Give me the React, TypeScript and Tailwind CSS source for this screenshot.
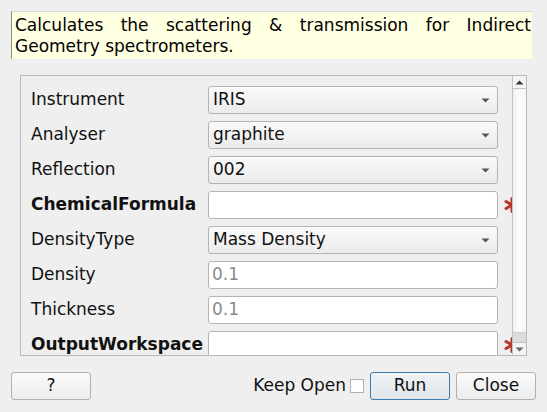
import React from "react";

const font = { fontFamily: '"DejaVu Sans", "Liberation Sans", sans-serif' };

function Arrow() {
  return (
    <svg width="9" height="5" viewBox="0 0 9 5" className="shrink-0">
      <path d="M0.5 0.5 L8.5 0.5 L4.5 4.5 Z" fill="#555" />
    </svg>
  );
}

function Combo({ value }: { value: string }) {
  return (
    <div className="h-[28px] w-[290px] flex items-center justify-between pl-[4px] pr-[7px] rounded-[3px] border border-[#b4b4b4] bg-gradient-to-b from-[#fafafa] to-[#ebebeb] text-[17px] text-[#111]">
      <span>{value}</span>
      <Arrow />
    </div>
  );
}

function Edit({ placeholder }: { placeholder?: string }) {
  return (
    <div className="h-[28px] w-[290px] flex items-center pl-[3px] rounded-[3px] border border-[#b4b4b4] bg-white text-[17px] text-[#8a8a8a]">
      {placeholder}
    </div>
  );
}

function Star() {
  return (
    <div className="w-[14px] h-[28px] flex items-center overflow-hidden">
      <svg width="16" height="16" viewBox="0 0 16 16" className="ml-[6px] shrink-0">
        <g stroke="#b5362b" strokeWidth="3" strokeLinecap="round">
          <line x1="8" y1="1.5" x2="8" y2="14.5" />
          <line x1="2" y1="4.5" x2="14" y2="11.5" />
          <line x1="2" y1="11.5" x2="14" y2="4.5" />
        </g>
      </svg>
    </div>
  );
}

type Row = { label: string; bold?: boolean; kind: "combo" | "edit"; value?: string; req?: boolean };

const rows: Row[] = [
  { label: "Instrument", kind: "combo", value: "IRIS" },
  { label: "Analyser", kind: "combo", value: "graphite" },
  { label: "Reflection", kind: "combo", value: "002" },
  { label: "ChemicalFormula", bold: true, kind: "edit", req: true },
  { label: "DensityType", kind: "combo", value: "Mass Density" },
  { label: "Density", kind: "edit", value: "0.1" },
  { label: "Thickness", kind: "edit", value: "0.1" },
  { label: "OutputWorkspace", bold: true, kind: "edit", req: true },
];

export default function App() {
  return (
    <div style={font} className="w-[547px] h-[412px] bg-[#efefef] flex flex-col overflow-hidden text-[#111]">
      <div className="mt-[11px] ml-[11px] w-[521px] h-[48px] bg-[#ffffe1] border-l border-l-[#8c8c8c] border-t border-t-[#d8d8d8] pl-[3px] pr-[1px] pt-[3px] text-[17px] leading-[21px] text-justify text-black overflow-hidden">
        Calculates the scattering &amp; transmission for Indirect Geometry spectrometers.
      </div>

      <div className="mt-[16px] ml-[20px] w-[507px] h-[281px] border border-[#b9b9b9] flex overflow-hidden">
        <div className="flex-1 overflow-hidden pl-[10px] pt-[10px] flex flex-col gap-[7px]">
          {rows.map((r) => (
            <div key={r.label} className="flex items-center shrink-0">
              <div className={`w-[177px] text-[17px] ${r.bold ? "font-bold" : ""}`}>{r.label}</div>
              {r.kind === "combo" ? <Combo value={r.value || ""} /> : <Edit placeholder={r.value} />}
              {r.req ? <Star /> : <div className="w-[14px]" />}
            </div>
          ))}
        </div>
        <div className="w-[14px] border-l border-[#c4c4c4] flex flex-col bg-[#f4f4f4]">
          <div className="h-[13px] flex items-center justify-center border-b border-[#c4c4c4]">
            <svg width="9" height="5" viewBox="0 0 9 5">
              <path d="M0.5 4.5 L8.5 4.5 L4.5 0.5 Z" fill="#333" />
            </svg>
          </div>
          <div className="flex-1 bg-gradient-to-r from-[#f0f0f0] via-[#fbfbfb] to-[#f6f6f6]" />
          <div className="h-[10px] bg-[#dcdcdc] border-t border-[#cfcfcf]" />
          <div className="h-[13px] flex items-center justify-center border-t border-[#c4c4c4]">
            <svg width="9" height="5" viewBox="0 0 9 5">
              <path d="M0.5 0.5 L8.5 0.5 L4.5 4.5 Z" fill="#666" />
            </svg>
          </div>
        </div>
      </div>

      <div className="mt-[16px] px-[11px] flex items-center text-[17px]">
        <button className="w-[80px] h-[28px] rounded-[3px] border border-[#b0b0b0] bg-gradient-to-b from-[#fafafa] to-[#ececec] text-[#111]">?</button>
        <div className="flex-1" />
        <span className="text-[#111]">Keep Open</span>
        <div className="ml-[4px] w-[14px] h-[14px] border border-[#b0b0b0] bg-white" />
        <button className="ml-[6px] w-[80px] h-[28px] rounded-[3px] border border-[#3b7db0] bg-gradient-to-b from-[#edf2f5] to-[#dfe6eb] text-[#111]">Run</button>
        <button className="ml-[6px] w-[80px] h-[28px] rounded-[3px] border border-[#b0b0b0] bg-gradient-to-b from-[#fafafa] to-[#ececec] text-[#111]">Close</button>
      </div>
    </div>
  );
}
